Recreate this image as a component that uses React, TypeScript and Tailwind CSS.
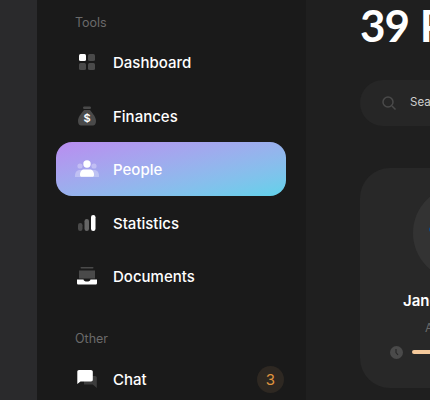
const font = { fontFamily: '"Inter", "Liberation Sans", sans-serif' };

function Dash() {
  return (
    <svg width="16" height="16" viewBox="0 0 16 16">
      <rect x="0" y="0" width="7" height="7" rx="1.5" fill="#fff" />
      <rect x="9" y="0" width="7" height="7" rx="1.5" fill="#4a4a4a" />
      <rect x="0" y="9" width="7" height="7" rx="1.5" fill="#4a4a4a" />
      <rect x="9" y="9" width="7" height="7" rx="1.5" fill="#4a4a4a" />
    </svg>
  );
}
function Bag() {
  return (
    <svg width="20" height="20" viewBox="0 0 20 20">
      <rect x="6" y="0.5" width="8" height="2.5" rx="1.2" fill="#4a4a4a" />
      <path d="M7 4h6c1 2 6 6 6 11 0 3-1.500 4.500-3 4.500H4C2.500 19.500 1 18 1 15 1 10 6 6 7 4z" fill="#4a4a4a" />
      <text x="10" y="16" textAnchor="middle" fontSize="11" fontWeight="600" fill="#fff" fontFamily="Inter">$</text>
    </svg>
  );
}
function People() {
  return (
    <svg width="24" height="18" viewBox="0 0 24 18">
      <circle cx="5" cy="6" r="2.600" fill="#fff" fillOpacity=".3" />
      <circle cx="19" cy="6" r="2.600" fill="#fff" fillOpacity=".3" />
      <path d="M0 16c0-4 2-6 5-6h14c3 0 5 2 5 6v1H0z" fill="#fff" fillOpacity=".3" />
      <circle cx="12" cy="4" r="3.700" fill="#fff" />
      <path d="M5 15c0-4 2-5.500 4-5.500h6c2 0 4 1.500 4 5.500 0 1-.6 1.800-1.500 1.800h-11C5.600 16.800 5 16 5 15z" fill="#fff" />
    </svg>
  );
}
function Stats() {
  return (
    <svg width="18" height="16" viewBox="0 0 18 16">
      <rect x="0" y="8" width="4.500" height="8" rx="2.200" fill="#4a4a4a" />
      <rect x="6.500" y="4" width="4.500" height="12" rx="2.200" fill="#666" />
      <rect x="13" y="0" width="4.500" height="16" rx="2.200" fill="#fff" />
    </svg>
  );
}
function Docs() {
  return (
    <svg width="20" height="18" viewBox="0 0 20 18">
      <rect x="3.500" y="0" width="13" height="1.500" rx=".7" fill="#4a4a4a" />
      <path d="M2 3.500h16v8H2z" fill="#4a4a4a" />
      <path d="M0 12.500h6.500c.3 1.500 1.500 2 3.500 2s3.200-.5 3.500-2H20v3.500c0 1-.6 1.600-1.500 1.600h-17C.6 17.600 0 17 0 16z" fill="#fff" />
    </svg>
  );
}
function Chat() {
  return (
    <svg width="20" height="18" viewBox="0 0 20 18">
      <path d="M7 6h11c1 0 1.800.8 1.800 1.800V18l-4-3.500H7z" fill="#3d3d3d" />
      <path d="M2 0h12c1 0 1.800.8 1.800 1.800v8c0 1-.8 1.700-1.800 1.700H3.500L.3 14V1.800C.3.800 1 0 2 0z" fill="#fff" />
    </svg>
  );
}

function Row({ icon, label, active, badge }: { icon: React.ReactNode; label: string; active?: boolean; badge?: string }) {
  return (
    <div
      className={
        "flex h-[53.500px] items-center rounded-2xl pt-[3px] pr-[2px] pl-[18.500px] text-[15px] font-medium text-white " +
        (active ? "bg-gradient-to-br from-[#b98cf0] to-[#5fd2ea]" : "")
      }
    >
      <div className="-mt-[2px] flex w-6 justify-center">{icon}</div>
      <span className="ml-[14.500px]">{label}</span>
      {badge && (
        <span className="ml-auto flex h-[27px] w-[27px] items-center justify-center rounded-full bg-[#2e2822] text-[15px] font-normal text-[#e0953f]">
          {badge}
        </span>
      )}
    </div>
  );
}

export default function App() {
  return (
    <div className="flex h-[400px] w-[430px] overflow-hidden bg-[#1f1f1f]" style={font}>
      <div className="h-full w-[37px] shrink-0 bg-[#2a2a2c]" />
      <div className="h-full w-[269px] shrink-0 overflow-hidden bg-[#1a1a1a] pr-5 pl-[19px]">
        <div className="mt-[15px] pl-[19px] text-[12.500px] leading-4 text-[#6a6a6a]">Tools</div>
        <div className="mt-[4px] flex flex-col">
          <Row icon={<Dash />} label="Dashboard" />
          <Row icon={<Bag />} label="Finances" />
          <Row icon={<People />} label="People" active />
          <Row icon={<Stats />} label="Statistics" />
          <Row icon={<Docs />} label="Documents" />
        </div>
        <div className="mt-[28px] pl-[19px] text-[12.500px] leading-4 text-[#6a6a6a]">Other</div>
        <div className="mt-[5px]">
          <Row icon={<Chat />} label="Chat" badge="3" />
        </div>
      </div>
      <div className="h-full w-[600px] shrink-0 pl-[54px]">
        <div className="h-[50px] text-[44px] leading-[50px] font-bold tracking-[-1px] [word-spacing:1px] whitespace-nowrap text-white" style={{ fontFamily: '"Lato", sans-serif' }}>39 People</div>
        <div className="mt-[30px] flex h-[46px] w-[400px] items-center rounded-[23px] bg-[#262626] pl-[22px]">
          <svg width="14" height="14" viewBox="0 0 14 14" fill="none" stroke="#4a4a4a" strokeWidth="1.500">
            <circle cx="6" cy="6" r="5" />
            <path d="M10 10l3.500 3.500" />
          </svg>
          <span className="ml-[14px] text-[11.500px] text-[#cfcfcf]">Search</span>
        </div>
        <div className="mt-[42px] flex h-[220px] w-[200px] flex-col items-center rounded-[30px] bg-[#282828] pt-[18px]">
          <div className="relative h-[94px] w-[94px] shrink-0 rounded-full bg-[#333]">
            <div className="absolute top-[41px] left-[16px] h-[5px] w-[10px] rounded-full bg-[#0b4a8f]" />
          </div>
          <div className="mt-[10px] text-[15px] font-semibold whitespace-nowrap text-white">Jane Robertson</div>
          <div className="mt-[6px] text-[12px] whitespace-nowrap text-[#6a6a6a]">Android Dev</div>
          <div className="mt-[9px] flex w-[140px] items-center gap-[9px]">
            <svg width="13" height="13" viewBox="0 0 13 13">
              <circle cx="6.500" cy="6.500" r="6.500" fill="#4a4a4a" />
              <path d="M6 3v3.500l2 2.500" stroke="#282828" strokeWidth="1.200" fill="none" />
            </svg>
            <div className="h-[4px] flex-1 rounded-full bg-[#f5c99b]" />
          </div>
        </div>
      </div>
    </div>
  );
}
